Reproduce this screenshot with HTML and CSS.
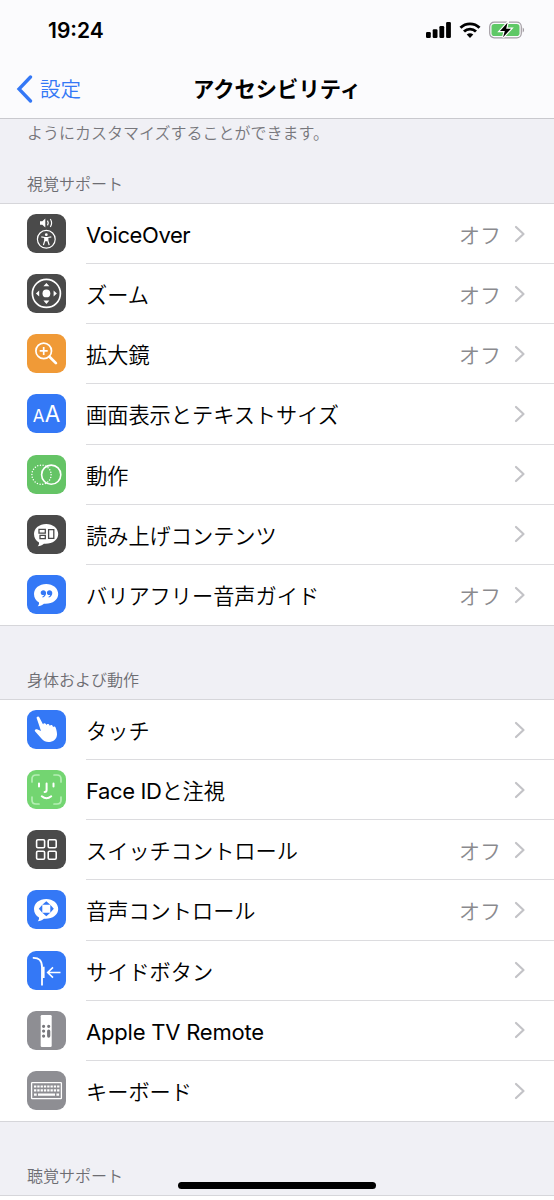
FILE: index.html
```html
<!DOCTYPE html>
<html lang="ja">
<head>
    <meta charset="UTF-8">
    <meta name="viewport" content="width=device-width, initial-scale=1.0">
    <title>アクセシビリティ</title>
    <link rel="stylesheet" href="styles.css">
</head>
<body>

<!-- Shared shapes -->
<svg class="defs" width="0" height="0">
    <symbol id="chevron" viewBox="0 0 12 18"><path d="M2 2l7.5 7L2 16" fill="none" stroke="#c3c3c7" stroke-width="2.2" stroke-linecap="round" stroke-linejoin="round"/></symbol>
    <symbol id="bubble" viewBox="0 0 39 39"><path d="M19.2 9C12.3 9 7 13.3 7 19c0 3.7 1.9 6.700 5 8.400.2 1.500-.3 2.700-1.300 3.800 2.500-.1 4.500-1.100 6.200-2.500 8 .7 14.300-3.700 14.300-9.700C31.200 13.300 26 9 19.200 9z" fill="#fff"/></symbol>
</svg>

<header>
    <div class="status-bar">
        <span class="time">19:24</span>
        <div class="status-icons">
            <svg width="25" height="16" viewBox="0 0 25 16">
                <rect x="0" y="10" width="4.800" height="6" rx="1.200"/>
                <rect x="6.700" y="7.200" width="4.800" height="8.800" rx="1.200"/>
                <rect x="13.400" y="4" width="4.800" height="12" rx="1.200"/>
                <rect x="20.100" y="0" width="4.800" height="16" rx="1.200"/>
            </svg>
            <svg width="22" height="16" viewBox="0 0 22 16">
                <path d="M1.500 5.700a13.700 13.700 0 0 1 19 0M5 9.500a8.700 8.700 0 0 1 12 0" fill="none" stroke="#000" stroke-width="2.900"/>
                <path d="M11 16l-3.300-3.400a5 5 0 0 1 6.600 0z"/>
            </svg>
            <svg width="36" height="18" viewBox="0 0 36 18">
                <rect x=".7" y="1.200" width="31.600" height="15.600" rx="4.500" fill="none" stroke="#a39da4" stroke-width="1.200"/>
                <rect x="2.500" y="3" width="28" height="12" rx="2.800" fill="#5fc866"/>
                <path d="M33.700 6.500c1.800.8 1.800 4.200 0 5z" fill="#a39da4"/>
                <path d="M18.500 1.800L11 10h4.800l-1.700 6.200L22 7.800h-4.800z" stroke="#fff" stroke-width="2.400" paint-order="stroke"/>
            </svg>
        </div>
    </div>
    <nav>
        <a class="back">
            <svg width="18" height="28" viewBox="0 0 18 28"><path d="M14.500 2L3 14l11.500 12" fill="none" stroke="#3478f6" stroke-width="3.300" stroke-linecap="round" stroke-linejoin="miter"/></svg>
            <span>設定</span>
        </a>
        <h1>アクセシビリティ</h1>
    </nav>
</header>

<main>
    <p class="note">ようにカスタマイズすることができます。</p>

    <h2>視覚サポート</h2>
    <ul>
        <li>
            <svg class="icon dark" viewBox="0 0 39 39" fill="none" stroke="#fff">
                <path d="M13 7.200h2.300l3-2.700v9l-3-2.700H13z" fill="#fff" stroke="none"/>
                <path d="M20.500 6.600q1.500 2.400 0 4.800M23.300 5q2.600 4 0 8" stroke-width="1.200"/>
                <circle cx="19.300" cy="25.300" r="8.900" stroke-width="1.200"/>
                <circle cx="19.300" cy="20.700" r="1.400" fill="#fff" stroke="none"/>
                <path d="M14.300 22.900l3.500.6v3L16.400 31.200M24.300 22.900l-3.500.6v3l1.400 4.700" stroke-width="1.200" stroke-linejoin="round"/>
                <path d="M17.700 23h3.200v4.300h-3.200z" fill="#fff" stroke="none"/>
            </svg>
            <div class="cell"><span class="label"><span class="latin">VoiceOver</span></span><span class="value">オフ</span><svg class="chevron"><use href="#chevron"/></svg></div>
        </li>
        <li>
            <svg class="icon dark" viewBox="0 0 39 39" fill="#fff">
                <circle cx="19.400" cy="19.400" r="14" fill="none" stroke="#fff" stroke-width="1.700"/>
                <circle cx="19.400" cy="19.400" r="3.900"/>
                <path d="M19.400 8.900l3 3.300h-6zM19.400 29.900l3-3.300h-6zM8.900 19.400l3.300-3v6zM29.900 19.400l-3.300-3v6z"/>
            </svg>
            <div class="cell"><span class="label">ズーム</span><span class="value">オフ</span><svg class="chevron"><use href="#chevron"/></svg></div>
        </li>
        <li>
            <svg class="icon orange" viewBox="0 0 39 39" fill="none" stroke="#fff">
                <circle cx="16.700" cy="16.900" r="7.800" stroke-width="1.700"/>
                <path d="M12.700 16.900h8M16.700 12.900v8" stroke-width="1.700"/>
                <path d="M22.500 22.700l6.400 6.400" stroke-width="2.700" stroke-linecap="round"/>
            </svg>
            <div class="cell"><span class="label">拡大鏡</span><span class="value">オフ</span><svg class="chevron"><use href="#chevron"/></svg></div>
        </li>
        <li>
            <svg class="icon blue" viewBox="0 0 39 39" fill="#fff">
                <text class="aa" x="5.800" y="27.700" font-size="17">A</text>
                <text class="aa" x="17.800" y="27.700" font-size="22.500">A</text>
            </svg>
            <div class="cell"><span class="label">画面表示とテキストサイズ</span><svg class="chevron"><use href="#chevron"/></svg></div>
        </li>
        <li>
            <svg class="icon green" viewBox="0 0 39 39" fill="none" stroke="#fff">
                <circle cx="14.500" cy="19.700" r="9.600" stroke-width="1.500" stroke-dasharray="0 2.740" stroke-linecap="round"/>
                <circle cx="24.200" cy="19.700" r="9.600" stroke-width="1.600"/>
            </svg>
            <div class="cell"><span class="label">動作</span><svg class="chevron"><use href="#chevron"/></svg></div>
        </li>
        <li>
            <svg class="icon dark" viewBox="0 0 39 39">
                <use href="#bubble"/>
                <path d="M12 14.400h6.300v3.700H12zM13 20.400h5.300v3.300H13zM21.600 14.700h5.200v8.700h-5.200z" fill="none" stroke="#4a4a4a" stroke-width="1.300"/>
            </svg>
            <div class="cell"><span class="label">読み上げコンテンツ</span><svg class="chevron"><use href="#chevron"/></svg></div>
        </li>
        <li>
            <svg class="icon blue" viewBox="0 0 39 39">
                <use href="#bubble"/>
                <path id="quote" d="M16.300 15.200c-1.500 0-2.600 1.100-2.600 2.500s1 2.400 2.400 2.400c.4 0 .7 0 1-.2-.3.900-1.100 1.500-2 1.800l.5.900c2.200-.7 3.500-2.400 3.500-4.600 0-1.700-1.200-2.800-2.800-2.800z" fill="#3478f6"/>
                <use href="#quote" x="6.200"/>
            </svg>
            <div class="cell"><span class="label">バリアフリー音声ガイド</span><span class="value">オフ</span><svg class="chevron"><use href="#chevron"/></svg></div>
        </li>
    </ul>

    <h2>身体および動作</h2>
    <ul>
        <li>
            <svg class="icon blue" viewBox="0 0 39 39" fill="#fff">
                <path d="M9.700 8.300c-.5-1.700 1.900-2.600 2.700-.9l3.700 7.200c.2-1.600 2.100-1.900 2.900-.4l.4.900c.4-1.600 2.500-1.600 3.100 0l.3.800c.6-1.400 2.500-1.200 3 .4l.2.700c.8-1 2.300-.6 2.700.8 1.600 4.800 2.300 9.200-1.200 12.100-4 3.200-9.700 2.700-12.600-.8l-6.700-7.500c-1.100-1.400.1-2.800 1.800-2.300l4 1.800z"/>
            </svg>
            <div class="cell"><span class="label">タッチ</span><svg class="chevron"><use href="#chevron"/></svg></div>
        </li>
        <li>
            <svg class="icon light-green" viewBox="0 0 39 39" fill="none" stroke="#fff" stroke-width="2" stroke-linecap="round">
                <path d="M5 12V9q0-4 4-4h3M27 5h3q4 0 4 4v3M34 27v3q0 4-4 4h-3M12 34H9q-4 0-4-4v-3" stroke="#b5eeb4" stroke-width="1.700"/>
                <path d="M12 13.500v3M26.500 13.500v3M19.600 13.500v6.600q0 2-2 2M14.800 26.300q4.700 4 9.400 0"/>
            </svg>
            <div class="cell"><span class="label"><span class="latin">Face ID</span>と注視</span><svg class="chevron"><use href="#chevron"/></svg></div>
        </li>
        <li>
            <svg class="icon dark" viewBox="0 0 39 39" fill="none" stroke="#fff" stroke-width="1.600">
                <rect x="9.600" y="9.700" width="8" height="8" rx="1.200"/>
                <rect x="21.200" y="9.700" width="8" height="8" rx="1.200"/>
                <rect x="9.600" y="21.200" width="8" height="8" rx="1.200"/>
                <rect x="21.200" y="21.200" width="8" height="8" rx="1.200"/>
            </svg>
            <div class="cell"><span class="label">スイッチコントロール</span><span class="value">オフ</span><svg class="chevron"><use href="#chevron"/></svg></div>
        </li>
        <li>
            <svg class="icon blue" viewBox="0 0 39 39">
                <use href="#bubble"/>
                <path d="M19.300 11.300l4 3.500h-8zM19.300 26.300l4-3.500h-8zM11.800 18.800l3.500-4v8zM26.800 18.800l-3.500-4v8z" fill="#3478f6"/>
            </svg>
            <div class="cell"><span class="label">音声コントロール</span><span class="value">オフ</span><svg class="chevron"><use href="#chevron"/></svg></div>
        </li>
        <li>
            <svg class="icon blue" viewBox="0 0 39 39" fill="none" stroke="#fff" stroke-width="1.800">
                <path d="M5.800 6.800C12 6.500 15 9.500 15 16v18.500"/>
                <path d="M16.500 15.700v11.200" stroke-width="2.200"/>
                <path d="M33.500 21.500H20.800M26 16.400l-5.300 5.100 5.300 5.100" stroke-width="1.600"/>
            </svg>
            <div class="cell"><span class="label">サイドボタン</span><svg class="chevron"><use href="#chevron"/></svg></div>
        </li>
        <li>
            <svg class="icon gray" viewBox="0 0 39 39">
                <rect x="13.700" y="4" width="11" height="32" rx="1.200" fill="#fff"/>
                <path d="M16.600 15.300h0M21.700 15.300h0M16.600 20.100h0M16.600 25.100h0M21.700 20.100v5" fill="none" stroke="#77777c" stroke-width="3.200" stroke-linecap="round"/>
            </svg>
            <div class="cell"><span class="label"><span class="latin wide">Apple TV Remote</span></span><svg class="chevron"><use href="#chevron"/></svg></div>
        </li>
        <li>
            <svg class="icon gray" viewBox="0 0 39 39" fill="none" stroke="#fff">
                <rect x="4.600" y="11.700" width="29.800" height="16" rx=".6" stroke-width="1.300"/>
                <path d="M7 15.500h25.500M7 19.400h25.500" stroke-width="2.200" stroke-dasharray="2.300 1"/>
                <path d="M7 23.700h2.700M11 23.700h17M29.400 23.700h2.700" stroke-width="2.200"/>
            </svg>
            <div class="cell"><span class="label">キーボード</span><svg class="chevron"><use href="#chevron"/></svg></div>
        </li>
    </ul>

    <h2>聴覚サポート</h2>
    <ul class="next"></ul>
</main>

<div class="home-indicator"></div>

</body>
</html>
```
FILE: styles.css
```css
* {
    box-sizing: border-box;
}

body {
    margin: 0;
    height: 1200px;
    overflow: hidden;
    background-color: #f0f0f5;
    color: #000;
    font-family: "Noto Sans CJK JP", sans-serif;
    font-weight: 350;
}

.defs {
    display: none;
}

svg {
    flex-shrink: 0;
}

header {
    height: 119px;
    background-color: #fbfbfd;
    border-bottom: 1px solid #c9c9ce;
}

.status-bar {
    height: 60px;
    padding: 0 29px 0 48px;
    display: flex;
    align-items: center;
    justify-content: space-between;
}

.time {
    font-family: Inter, sans-serif;
    font-size: 21px;
    font-weight: 600;
}

.status-icons {
    display: flex;
    align-items: center;
    gap: 8px;
}

nav {
    height: 58px;
    display: grid;
    grid-template-columns: 1fr auto 1fr;
    align-items: center;
    padding: 0 16px;
}

.back {
    display: flex;
    align-items: center;
    gap: 6px;
    color: #3478f6;
    font-size: 20.5px;
}

.back span {
    padding-bottom: 2px;
}

h1 {
    margin: 0;
    padding-bottom: 4px;
    font-size: 21.3px;
    font-weight: 700;
}

.note {
    height: 28px;
    margin: 0;
    padding-left: 27px;
    font-size: 16px;
    line-height: 26px;
    color: #77777c;
}

h2 {
    height: 73px;
    margin: 0;
    padding: 41px 0 0 27px;
    font-size: 16px;
    font-weight: 350;
    line-height: 24px;
    color: #6d6d72;
}

.note + h2 {
    height: 56px;
    padding-top: 24px;
}

ul {
    height: 423px;
    margin: 0;
    padding: 0;
    list-style: none;
    display: grid;
    grid-auto-rows: 1fr;
    background-color: #fff;
    border-top: 1px solid #d6d6da;
    border-bottom: 1px solid #d6d6da;
}

ul.next {
    height: 20px;
}

li {
    display: flex;
    align-items: center;
    padding-left: 27px;
}

.icon {
    width: 39px;
    height: 39px;
    margin-bottom: 1px;
    border-radius: 9px;
}

.dark { background-color: #4a4a4a; }
.orange { background-color: #f09a37; }
.blue { background-color: #3478f6; }
.green { background-color: #65c466; }
.light-green { background-color: #73d571; }
.gray { background-color: #8e8e93; }

.aa {
    font-family: Inter, sans-serif;
    font-weight: 400;
}

.cell {
    flex: 1;
    align-self: stretch;
    display: flex;
    align-items: center;
    margin-left: 20px;
    padding-right: 28px;
    border-bottom: 1px solid #dcdcdf;
}

li:last-child .cell {
    border-bottom: none;
}

.label {
    flex: 1;
    font-size: 21.2px;
}

.latin {
    font-family: Inter, sans-serif;
    font-size: 22px;
    font-weight: 400;
    letter-spacing: -0.4px;
}

.wide {
    letter-spacing: -0.2px;
}

.value {
    margin-right: 13px;
    color: #8a8a8e;
    font-size: 21px;
}

.chevron {
    width: 12px;
    height: 18px;
}

/* Home indicator floats over the list */
.home-indicator {
    position: absolute;
    left: 178px;
    top: 1182px;
    width: 198px;
    height: 7px;
    border-radius: 4px;
    background-color: #000;
}
```
